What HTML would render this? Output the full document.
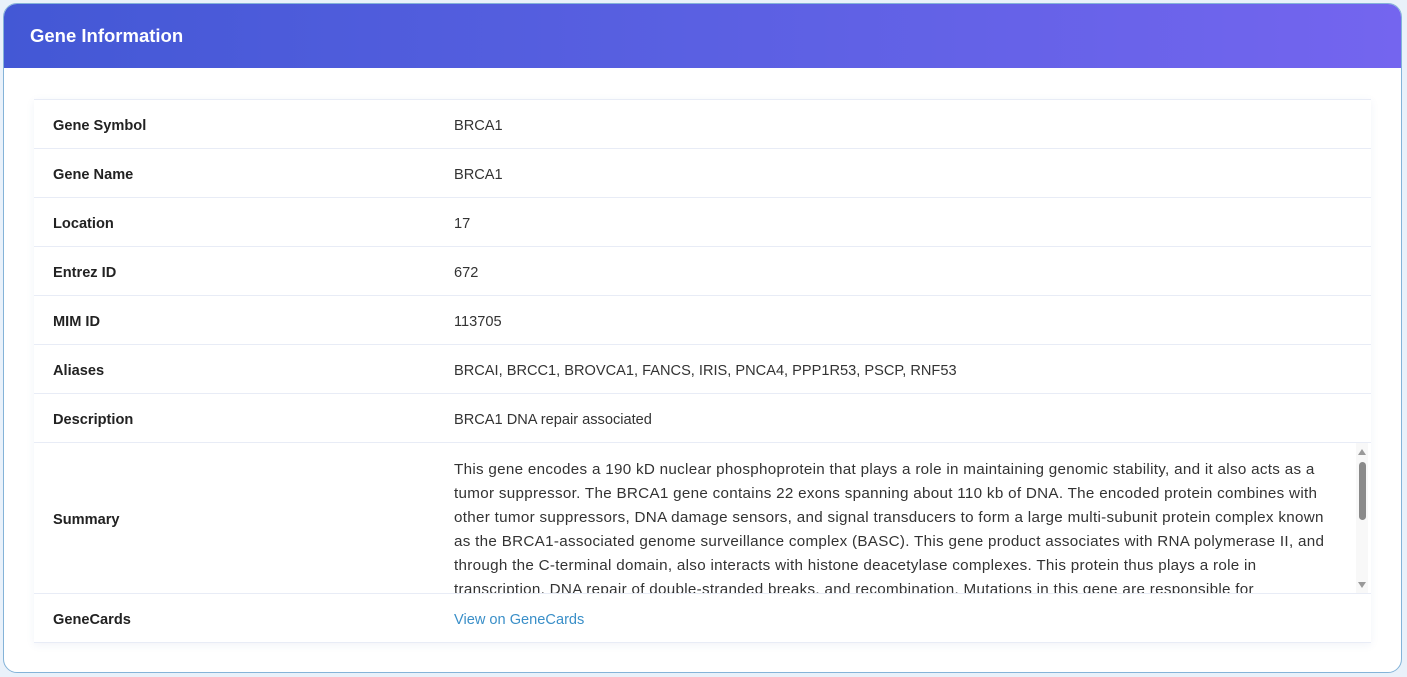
<!DOCTYPE html>
<html><head><meta charset="utf-8"><style>
html,body{margin:0;padding:0;width:1407px;height:677px;background:#e9f1fa;overflow:hidden;font-family:"Liberation Sans",sans-serif;}
.card{position:absolute;left:3px;top:3px;width:1397px;height:668px;background:#fff;border:1px solid #84b3d8;border-radius:14px;overflow:hidden;}
.hdr{height:64px;background:linear-gradient(90deg,#4358d5,#5a60e2 50%,#7465ef);color:#fff;font-weight:bold;font-size:18.5px;line-height:64px;padding-left:26px;}
table{position:absolute;left:30px;top:95px;width:1337px;border-collapse:collapse;box-shadow:0 2px 8px rgba(80,100,160,0.08);font-size:14.6px;color:#333;}
td{border-top:1px solid #e8ecf6;border-bottom:1px solid #e8ecf6;height:45px;padding:3px 0 0 19px;vertical-align:middle;}
td.l{width:382px;font-weight:bold;color:#222;}
.sum{height:150px;overflow:hidden;position:relative;padding:0;}
.sum div{padding:15px 40px 0 0;line-height:24px;font-size:15.2px;letter-spacing:0.3px;white-space:nowrap;}
.sb{position:absolute;right:3px;top:0;width:12px;height:150px;}
a{color:#3a8fc8;text-decoration:none;}
</style></head><body>
<div class="card">
<div class="hdr">Gene Information</div>
<table>
<tr><td class="l">Gene Symbol</td><td>BRCA1</td></tr>
<tr><td class="l">Gene Name</td><td>BRCA1</td></tr>
<tr><td class="l">Location</td><td>17</td></tr>
<tr><td class="l">Entrez ID</td><td>672</td></tr>
<tr><td class="l">MIM ID</td><td>113705</td></tr>
<tr><td class="l">Aliases</td><td>BRCAI, BRCC1, BROVCA1, FANCS, IRIS, PNCA4, PPP1R53, PSCP, RNF53</td></tr>
<tr><td class="l">Description</td><td>BRCA1 DNA repair associated</td></tr>
<tr><td class="l" style="height:147px">Summary</td><td style="padding:0 0 0 19px;height:150px"><div class="sum"><div>This gene encodes a 190 kD nuclear phosphoprotein that plays a role in maintaining genomic stability, and it also acts as a<br>tumor suppressor. The BRCA1 gene contains 22 exons spanning about 110 kb of DNA. The encoded protein combines with<br>other tumor suppressors, DNA damage sensors, and signal transducers to form a large multi-subunit protein complex known<br>as the BRCA1-associated genome surveillance complex (BASC). This gene product associates with RNA polymerase II, and<br>through the C-terminal domain, also interacts with histone deacetylase complexes. This protein thus plays a role in<br>transcription, DNA repair of double-stranded breaks, and recombination. Mutations in this gene are responsible for<br>approximately 40% of inherited breast cancers.</div>
<svg class="sb" viewBox="0 0 12 150"><rect width="12" height="150" fill="#f8f8f8"/><path d="M2 12 L6 6 L10 12Z" fill="#999"/><rect x="3" y="19" width="7" height="58" rx="3.5" fill="#8a8a8a"/><path d="M2 139 L6 145 L10 139Z" fill="#999"/></svg></div></td></tr>
<tr><td class="l">GeneCards</td><td><a>View on GeneCards</a></td></tr>
</table>
</div>
</body></html>
